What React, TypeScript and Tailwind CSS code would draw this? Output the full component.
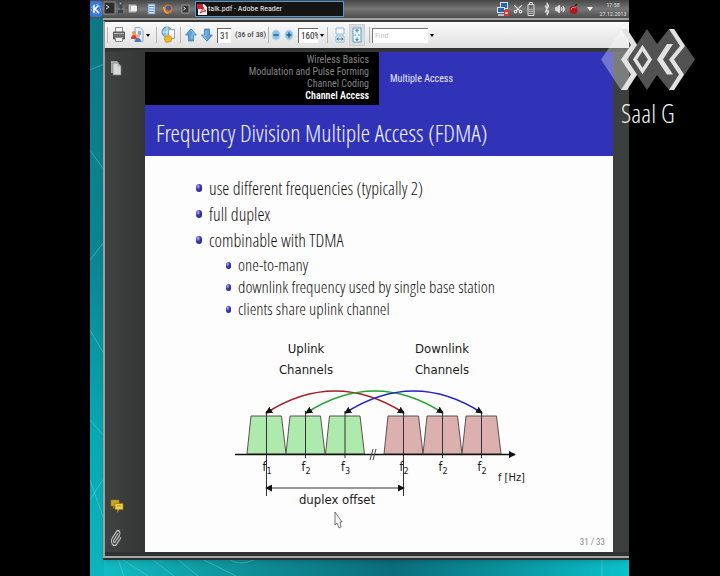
import React from "react";
import { Paperclip, Scissors, Bluetooth, Volume2 } from "lucide-react";

const slideFont = "font-['Open_Sans_Condensed_Light','Open_Sans_Condensed','Roboto_Condensed',sans-serif]";
const uiFont = "font-['Roboto_Condensed','Open_Sans',sans-serif]";

function Separator({ className = "" }: { className?: string }) {
  return <span className={`h-4 w-px shrink-0 bg-[#b4b4b4] ${className}`} />;
}

function Wallpaper() {
  return (
    <svg className="absolute inset-0 h-full w-full" viewBox="90 0 539 576" preserveAspectRatio="none" aria-hidden="true">
      <defs>
        <linearGradient id="sea" x1="0" y1="0" x2="0" y2="1">
          <stop offset="0" stopColor="#0d7684" />
          <stop offset="0.45" stopColor="#0b8593" />
          <stop offset="0.75" stopColor="#08a8b2" />
          <stop offset="1" stopColor="#0cb4be" />
        </linearGradient>
        <linearGradient id="shore" x1="0" y1="0" x2="1" y2="0">
          <stop offset="0" stopColor="#12bcc4" />
          <stop offset="0.25" stopColor="#0f929b" />
          <stop offset="0.55" stopColor="#0b6d7c" />
          <stop offset="0.75" stopColor="#0a909c" />
          <stop offset="1" stopColor="#0cc2cc" />
        </linearGradient>
      </defs>
      <rect x="90" width="539" height="576" fill="url(#sea)" />
      <rect x="104" y="550" width="525" height="26" fill="url(#shore)" />
      <path d="M90 70l14-6M90 150l14 20M90 260l14-18M90 330l14 24M90 420l14 16M90 480l34 96M90 500l14-22M120 558l28 18M150 558l24 18M176 558l22 18M200 558l36 18M602 558v18M230 560q10 6 24 0" fill="none" stroke="#6fd9dc" strokeOpacity="0.45" />
    </svg>
  );
}

function Taskbar() {
  return (
    <header className={`relative flex h-[18px] items-center bg-linear-to-b from-[#474747] via-[#777777] to-[#4c4c4c] ${uiFont}`}>
      <button aria-label="Application launcher" className="flex h-4 w-3 shrink-0 items-center justify-center rounded-xs bg-[#3a78d8]">
        <svg viewBox="0 0 12 16" className="h-4 w-3">
          <path d="M4 4v8M8.500 4.500L5 8l4 4" stroke="#fff" strokeWidth="1.600" fill="none" />
          <circle cx="6" cy="8" r="4.500" fill="none" stroke="#b9d3fb" strokeDasharray="1.500 1.500" />
        </svg>
      </button>
      <svg viewBox="0 0 92 18" className="ml-px h-[18px] w-[92px] shrink-0" aria-hidden="true">
        <rect x="1" y="2" width="11" height="12" fill="#2c2c2c" stroke="#8d8d8d" />
        <path d="M3 5l3 2-3 2" stroke="#ddd" fill="none" />
        <path d="M16 2h3v3h-3zM15 7h5M18 5v6M22 8h5" stroke="#3a3f49" fill="#8ea6c8" />
        <path d="M15 10h5v3h-5z" fill="#39414f" />
        <rect x="25" y="4" width="9" height="9" fill="#bcbcbc" stroke="#555" />
        <rect x="28" y="6" width="6" height="5" fill="#eee" />
        <rect x="45" y="4" width="7" height="10" fill="#dfe9f6" stroke="#5b8cc4" />
        <path d="M46 6.500h5M46 9h5M46 11.500h5" stroke="#5b8cc4" />
        <circle cx="65" cy="9" r="4.500" fill="#e8731c" />
        <circle cx="65.500" cy="8" r="2.600" fill="#2f62ad" />
        <path d="M60.500 7q1 6 5 6.500" stroke="#f6b13c" strokeWidth="1.200" fill="none" />
        <rect x="79" y="5" width="7" height="8" fill="#333" stroke="#9a9a9a" />
        <path d="M80.500 7l2 1.500-2 1.500" stroke="#eee" fill="none" />
      </svg>
      <button className="flex h-4 w-[149px] shrink-0 items-center gap-px border border-[#4f9bd8] bg-[#141414] px-px text-[8px] whitespace-nowrap text-[#f0f0f0]">
        <svg viewBox="0 0 10 11" className="h-[11px] w-[10px] shrink-0" aria-hidden="true">
          <path d="M1 0h6l3 3v8H1z" fill="#f1f1f1" />
          <path d="M0 0h6v5H0z" fill="#c9242b" />
          <path d="M3 9q3-3 3-6 1 4 3 4-3 0-6 2z" fill="none" stroke="#c9242b" />
        </svg>
        talk.pdf - Adobe Reader
      </button>
      <div className="ml-auto flex shrink-0 items-center text-[#dcdcdc]">
        <svg viewBox="0 0 12 16" className="h-4 w-3" aria-hidden="true">
          <rect x="3.500" y="1.500" width="7" height="6" fill="#2f62a8" stroke="#d7e2f1" />
          <rect x="0.500" y="6.500" width="7" height="5" fill="#2f62a8" stroke="#d7e2f1" />
          <path d="M1 14h6" stroke="#d7e2f1" strokeWidth="1.500" />
          <rect x="7" y="9" width="5" height="6" fill="#cf3b33" />
          <path d="M8.500 11l2 2M10.500 11l-2 2" stroke="#fff" />
        </svg>
        <Scissors className="ml-1 h-3 w-[10px] -rotate-90" strokeWidth={3} />
        <svg viewBox="0 0 8 14" className="ml-1 h-[14px] w-2" aria-hidden="true">
          <path d="M2.500 2V.5h3V2M1 2.500h6v11H1z" fill="none" stroke="#dcdcdc" />
          <path d="M2 11.500h4M2 9.500h4M2 7.500h4" stroke="#b5b5b5" />
        </svg>
        <Bluetooth preserveAspectRatio="none" className="ml-2 h-[14px] w-2" strokeWidth={3} />
        <Volume2 className="ml-1 h-3 w-[10px]" strokeWidth={3} fill="#dcdcdc" />
        <svg viewBox="0 0 10 12" className="ml-1 h-3 w-[10px]" aria-hidden="true">
          <circle cx="4.500" cy="7" r="4" fill="#b3161c" />
          <path d="M2 7a3 3 0 0 1 5-2" stroke="#f08282" fill="none" />
          <path d="M6 3l2-2" stroke="#5c0b0e" strokeWidth="1.500" />
        </svg>
        <span className="ml-2 mr-1 h-0 w-0 border-x-[3px] border-t-4 border-x-transparent border-t-[#f2f2f2]" />
        <time className="w-8 text-center text-[6px] leading-[9px] text-[#e0e0e0]">
          17:58
          <br />
          27.12.2013
        </time>
      </div>
    </header>
  );
}

function Arrow({ down = false }: { down?: boolean }) {
  return (
    <svg viewBox="0 0 12 14" className={down ? "h-[14px] w-3 rotate-180" : "h-[14px] w-3"} aria-hidden="true">
      <path d="M6 .8L11.400 7H8.500v6h-5V7H.6z" fill="#5aa2d8" stroke="#3b7cb4" strokeWidth="0.800" />
      <path d="M6 2L9.500 6.200H7v5" fill="none" stroke="#a9d4f2" strokeWidth="0.800" />
    </svg>
  );
}

function ZoomGlyph({ plus = false }: { plus?: boolean }) {
  return (
    <svg viewBox="0 0 10 12" className="h-3 w-[10px]" aria-hidden="true">
      <ellipse cx="5" cy="6" rx="4" ry="5" fill="#8cc3e6" stroke="#bcd9ec" />
      <path d={plus ? "M2.500 6h5M5 3.500v5" : "M2.500 6h5"} stroke="#1d5f96" strokeWidth="1.500" />
    </svg>
  );
}

function Caret({ label }: { label: string }) {
  return (
    <button aria-label={label} className="flex h-4 w-2 shrink-0 items-center justify-center">
      <span className="h-0 w-0 border-x-2 border-t-[3px] border-x-transparent border-t-black" />
    </button>
  );
}

function Toolbar() {
  return (
    <nav className={`flex h-[26px] items-center overflow-hidden bg-linear-to-b from-[#fafafa] to-[#dfe0df] pl-[2px] text-[#1b1b1b] ${uiFont}`}>
      <Separator />
      <button aria-label="Print" className="ml-1 shrink-0">
        <svg viewBox="0 0 14 18" className="h-[18px] w-[14px]">
          <path d="M3.500 1.500h7v5h-7z" fill="#f4f4f4" stroke="#888" />
          <path d="M1.500 6h11v7h-11z" fill="#6f6f6f" stroke="#555" />
          <path d="M2 7.500h10" stroke="#b5b5b5" />
          <path d="M3.500 11.500h7v4h-7z" fill="#efefef" stroke="#8a8a8a" />
        </svg>
      </button>
      <button aria-label="Share" className="ml-1 shrink-0">
        <svg viewBox="0 0 14 18" className="h-[18px] w-[14px]">
          <path d="M5 1.500h5l3 3v11H5z" fill="#e7eef5" stroke="#8fa7bd" />
          <path d="M8 5h3v4H8z" fill="#72aee0" />
          <circle cx="4" cy="7" r="2" fill="#eb9a4d" />
          <path d="M1 13q0-4 3-4t3 4z" fill="#d24434" />
          <circle cx="8" cy="10" r="2" fill="#f2b56c" />
          <path d="M5 16q0-4 3-4t3 4z" fill="#4b74c9" />
        </svg>
      </button>
      <Caret label="Share options" />
      <Separator className="ml-1" />
      <button aria-label="Open from web" className="ml-1 shrink-0">
        <svg viewBox="0 0 15 18" className="h-[18px] w-[15px]">
          <circle cx="6" cy="6" r="5" fill="#8fc0e6" stroke="#4f8ec2" />
          <path d="M1.500 6h9M6 1v10" stroke="#d7ebf9" />
          <path d="M7.500 3.500h6v9h-6z" fill="#f5f7f9" stroke="#91a4b6" />
          <path d="M7 8.500l4 3-1 4-5 1-2-4z" fill="#f0b429" stroke="#c98a12" strokeWidth="0.800" />
        </svg>
      </button>
      <Separator className="ml-1" />
      <button aria-label="Previous page" className="ml-1 shrink-0"><Arrow /></button>
      <button aria-label="Next page" className="ml-1 shrink-0"><Arrow down /></button>
      <input aria-label="Page number" defaultValue="31" className="ml-1 h-[15px] w-[14px] shrink-0 border-t border-l border-[#666] bg-white pl-[2px] text-[9px]" />
      <span className="ml-1 w-8 shrink-0 text-[8px] whitespace-nowrap">(36 of 38)</span>
      <Separator className="ml-px" />
      <button aria-label="Zoom out" className="ml-[2px] shrink-0"><ZoomGlyph /></button>
      <button aria-label="Zoom in" className="ml-[3px] shrink-0"><ZoomGlyph plus /></button>
      <input aria-label="Zoom level" defaultValue="160%" className="ml-1 h-[15px] w-[20px] shrink-0 border-t border-l border-[#666] bg-white pl-[2px] text-[9px]" />
      <Caret label="Zoom levels" />
      <Separator className="ml-px" />
      <button aria-label="Fit width" className="ml-1 flex h-5 w-4 shrink-0 items-center justify-center">
        <svg viewBox="0 0 10 16" className="h-4 w-[10px]">
          <path d="M1 1h8v6H1zM1 9h8v6H1z" fill="#f4f9fd" stroke="#8fb6d3" />
          <path d="M2 12h6M3.500 10.500L2 12l1.500 1.500M6.500 10.500L8 12l-1.500 1.500" stroke="#1f6fa8" fill="none" />
        </svg>
      </button>
      <button aria-label="Fit page" className="ml-px flex h-[22px] w-4 shrink-0 items-center justify-center border border-[#cfcfcf] bg-[#d9dcdd]">
        <svg viewBox="0 0 10 16" className="h-4 w-[10px]">
          <path d="M1 1h8v14H1z" fill="#e9f4fb" stroke="#5d9fcb" />
          <path d="M5 2.500v3M5 10.500v3M3.500 4L5 2.500 6.500 4M3.500 12L5 13.500 6.500 12M2.500 8h1.500M6 8h1.500" stroke="#1f6fa8" fill="none" />
        </svg>
      </button>
      <Separator className="ml-1" />
      <input aria-label="Find" placeholder="Find" className="ml-[2px] h-[15px] w-14 shrink-0 border-t border-l border-[#777] bg-white pl-[2px] text-[8px] placeholder:text-[#c4c4c4]" />
      <Caret label="Find options" />
    </nav>
  );
}

function SidePanel() {
  return (
    <aside className="flex w-10 shrink-0 flex-col items-start bg-linear-to-r from-[#414343] to-[#343535] pl-[5px]">
      <button aria-label="Pages" className="mt-2">
        <svg viewBox="0 0 12 16" className="h-4 w-3">
          <path d="M1 1h6l2 2v10H1z" fill="#a8a8a8" />
          <path d="M3 3h5l3 3v9H3z" fill="#d9d9d9" stroke="#777" strokeWidth="0.600" />
          <path d="M8 3v3h3" fill="none" stroke="#888" strokeWidth="0.600" />
        </svg>
      </button>
      <button aria-label="Comments" className="mt-auto">
        <svg viewBox="0 0 14 14" className="h-[14px] w-[14px]">
          <path d="M1 1h8v6H4.500l-1 2.500V7H1z" fill="#c9a51f" stroke="#9b7c10" strokeWidth="0.600" />
          <path d="M5 4.500h8v6h-4l-1.500 3v-3H5z" fill="#f0d04c" stroke="#9b7c10" strokeWidth="0.800" />
          <path d="M7 7h4" stroke="#b18f18" />
        </svg>
      </button>
      <button aria-label="Attachments" className="mt-4 mb-[5px]">
        <Paperclip preserveAspectRatio="none" className="h-[18px] w-3 text-[#c3c3c3]" strokeWidth={2} />
      </button>
    </aside>
  );
}

function Ball({ small = false }: { small?: boolean }) {
  return (
    <span
      className={
        small
          ? "h-[7px] w-[5px] shrink-0 rounded-full bg-radial-[at_35%_30%] from-[#b9b9ee] via-[#3a3ab4] via-40% to-[#1d1d70]"
          : "h-2 w-[6px] shrink-0 rounded-full bg-radial-[at_35%_30%] from-[#b9b9ee] via-[#3a3ab4] via-40% to-[#1d1d70]"
      }
    />
  );
}

const sections = ["Wireless Basics", "Modulation and Pulse Forming", "Channel Coding"];
const points = ["use different frequencies (typically 2)", "full duplex", "combinable with TDMA"];
const subPoints = ["one-to-many", "downlink frequency used by single base station", "clients share uplink channel"];

const uplink = [
  { x: 266.500, sub: "1" },
  { x: 305.500, sub: "2" },
  { x: 345, sub: "3" },
];
const downlink = [
  { x: 403.500, sub: "2" },
  { x: 442.500, sub: "2" },
  { x: 481.500, sub: "2" },
];

function Channel({ x, sub, fill, long }: { x: number; sub: string; fill: string; long: boolean }) {
  return (
    <g>
      <path d={`M${x - 19.500} 454l4-38h30.500l4.500 38z`} fill={fill} stroke="#5d5050" />
      <path d={`M${x} 411V${long ? 496 : 458}`} stroke="#333" />
      <text x={x - 4} y="471" fontSize="12">f</text>
      <text x={x} y="474" fontSize="9">{sub}</text>
    </g>
  );
}

function Diagram() {
  return (
    <svg viewBox="145 336 468 196" className="block w-full font-['DejaVu_Sans_Condensed','DejaVu_Sans',sans-serif]" role="img" aria-label="Uplink and downlink channels">
      <defs>
        <marker id="head" viewBox="0 0 8 8" refX="7" refY="4" markerWidth="7" markerHeight="7" markerUnits="userSpaceOnUse" orient="auto-start-reverse">
          <path d="M0 0l8 4-8 4z" fill="#111" />
        </marker>
      </defs>
      <g fill="#1a1a1a" fontSize="13" textAnchor="middle">
        <text x="306" y="353">Uplink</text>
        <text x="306" y="374">Channels</text>
        <text x="442" y="353">Downlink</text>
        <text x="442" y="374">Channels</text>
      </g>
      <g fill="#1a1a1a">
        {uplink.map((c, i) => <Channel key={c.x} x={c.x} sub={c.sub} fill="#aeeaae" long={i === 0} />)}
        {downlink.map((c, i) => <Channel key={c.x} x={c.x} sub={c.sub} fill="#dbb0ae" long={i === 0} />)}
      </g>
      <path d="M235 454.500H515" stroke="#111" strokeWidth="1.500" markerEnd="url(#head)" />
      <path d="M370 460l3-11M373 460l3-11" stroke="#444" />
      <g fill="none" strokeWidth="1.500">
        <path d="M266 413Q335 369 404 413" stroke="#a31f25" markerStart="url(#head)" markerEnd="url(#head)" />
        <path d="M306 413Q375 369 443 413" stroke="#22a52c" markerStart="url(#head)" markerEnd="url(#head)" />
        <path d="M345 413Q414 369 482 413" stroke="#2424c4" markerStart="url(#head)" markerEnd="url(#head)" />
      </g>
      <path d="M266 488H404" stroke="#333" markerStart="url(#head)" markerEnd="url(#head)" />
      <g fill="#1a1a1a">
        <text x="337" y="504" fontSize="13" textAnchor="middle">duplex offset</text>
        <text x="498" y="481" fontSize="11">f [Hz]</text>
      </g>
      <path d="M335 512v13l2-2 2 5 2-1-1-5h2z" fill="#f4f4f4" stroke="#555" strokeWidth="0.800" />
    </svg>
  );
}

function Slide() {
  return (
    <main className={`flex min-w-0 flex-1 flex-col bg-[#fdfdfd] text-[#111] ${slideFont}`}>
      <div className={`flex bg-[#3033b8] text-[10px] leading-3 ${uiFont}`}>
        <ul className="w-1/2 bg-black pt-[2px] pr-[10px] pb-[3px] text-right text-[#858585]">
          {sections.map((s) => <li key={s}>{s}</li>)}
          <li className="font-semibold text-white">Channel Access</li>
        </ul>
        <p className="flex w-1/2 items-center pl-[11px] text-[#e9e9fd]">Multiple Access</p>
      </div>
      <h1 className="bg-[#3033b8] px-[11px] pt-3 pb-[7px] text-2xl leading-8 whitespace-nowrap text-[#f6f6ff]">Frequency Division Multiple Access (FDMA)</h1>
      <ul className="mt-5 flex flex-col gap-[2px] pl-[51px] text-lg leading-6">
        {points.map((p) => (
          <li key={p} className="flex items-center gap-[7px]"><Ball />{p}</li>
        ))}
      </ul>
      <ul className="mt-[2px] pl-[81px] text-[17px] leading-[22px]">
        {subPoints.map((p) => (
          <li key={p} className="flex items-center gap-[7px]"><Ball small />{p}</li>
        ))}
      </ul>
      <div className="mt-4"><Diagram /></div>
      <footer className={`mt-auto pr-2 pb-[2px] text-right text-[9px] leading-4 text-[#888] ${uiFont}`}>31 / 33</footer>
    </main>
  );
}

function RoomLogo() {
  return (
    <div className="absolute top-[28px] right-[24px] w-24">
      <svg viewBox="600 28 96 64" className="block h-16 w-24" role="img" aria-label="SOCS">
        <path d="M601 59.500L622 29h5l10 15 10-15 10 15 12-15h5l21 30.500L674 90h-5l-12-15-10 15-10-15-10 15h-6z" fill="#fff" fillOpacity="0.32" />
        <g fill="#e2e2e2">
          <path d="M621 29h6l10 16-10 14.500 10 15-10 15.500h-6l10-15.500-10-15 10-14.500z" />
          <path d="M669 29h5l11 17-11 13.500 10 15-10 15.500h-5l10-15.500-10-15 11-13.500z" />
        </g>
        <path d="M642.500 48L650 59.500 642.500 71 635 59.500z" fill="none" stroke="#e2e2e2" strokeWidth="3.500" />
        <path d="M667 44h6l-10 15.500 10 15h-6l-10-15z" fill="#e2e2e2" />
      </svg>
      <p className="mt-[5px] pl-[21px] font-['Open_Sans_Condensed_Light','Roboto_Condensed',sans-serif] text-[26px] leading-8 whitespace-nowrap text-[#f0f0f0]">Saal G</p>
    </div>
  );
}

export default function App() {
  return (
    <div className="relative flex min-h-screen bg-black pr-[91px] pl-[90px]">
      <div className="relative flex min-w-0 flex-1 flex-col">
        <Wallpaper />
        <Taskbar />
        <section className="relative mb-4 ml-[13px] flex flex-1 flex-col border-t-2 border-b-2 border-t-[#a2a2a2] border-b-[#2e3030] shadow-md">
          <div className="flex flex-1 flex-col border-t-2 border-b-2 border-l-2 border-t-[#3a3a3a] border-b-[#a6a6a6] border-l-[#9d9f9f] bg-[#363838]">
            <Toolbar />
            <div className="flex flex-1 border-t-2 border-b-4 border-[#303131] pt-[2px]">
              <SidePanel />
              <Slide />
              <div className="w-4 shrink-0 bg-[#3d3f3f]" />
            </div>
          </div>
        </section>
      </div>
      <RoomLogo />
    </div>
  );
}
